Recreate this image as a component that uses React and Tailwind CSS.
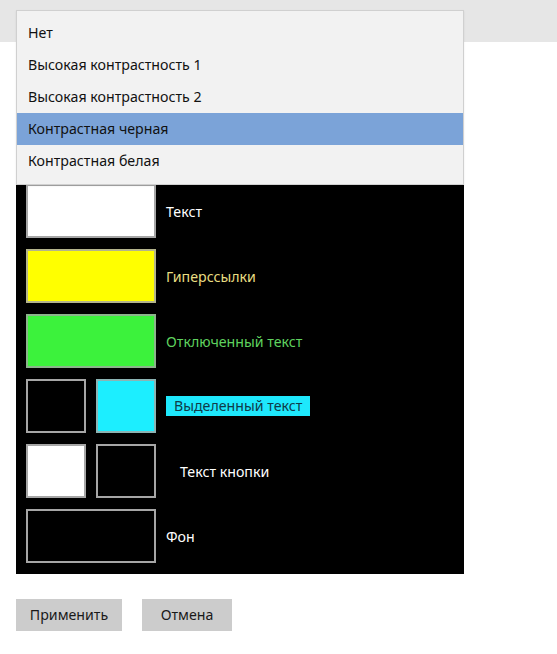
export default function App() {
  const font = { fontFamily: '"Noto Sans", "Open Sans", sans-serif' };
  const items = [
    "Нет",
    "Высокая контрастность 1",
    "Высокая контрастность 2",
    "Контрастная черная",
    "Контрастная белая",
  ];
  return (
    <div
      className="relative w-[557px] h-[654px] bg-white overflow-hidden font-['Noto_Sans','Open_Sans',sans-serif]"
      style={font}
    >
      <div className="h-[42px] bg-[#e6e6e6]" />
      <div className="px-4">
        <div className="mt-[131px] w-[448px] bg-black px-[10px] py-[11px] flex flex-col gap-[11px]">
          <div className="h-[54px] flex items-center">
            <div className="w-[130px] h-[54px] bg-white border-2 border-[#a6a6a6]" />
            <span className="ml-[10px] mt-[2px] text-[14.2px] text-white">Текст</span>
          </div>
          <div className="h-[54px] flex items-center">
            <div className="w-[130px] h-[54px] bg-[#ffff00] border-2 border-[#b4b48c]" />
            <span className="ml-[10px] mt-[2px] text-[14.2px] text-[#e9de82]">Гиперссылки</span>
          </div>
          <div className="h-[54px] flex items-center">
            <div className="w-[130px] h-[54px] bg-[#3cf23c] border-2 border-[#8cb48c]" />
            <span className="ml-[10px] mt-[2px] text-[14.2px] text-[#5fd25f]">Отключенный текст</span>
          </div>
          <div className="h-[54px] flex items-center">
            <div className="w-[60px] h-[54px] bg-black border-2 border-[#a6a6a6]" />
            <div className="ml-[10px] w-[60px] h-[54px] bg-[#1ceeff] border-2 border-[#8cb4b4]" />
            <span className="ml-[10px] h-[20px] px-2 flex items-center bg-[#1ee8fc] text-[14.2px] text-[#0f3a48]">
              Выделенный текст
            </span>
          </div>
          <div className="h-[54px] flex items-center">
            <div className="w-[60px] h-[54px] bg-white border-2 border-[#a6a6a6]" />
            <div className="ml-[10px] w-[60px] h-[54px] bg-black border-2 border-[#a6a6a6]" />
            <span className="ml-[24px] mt-[2px] text-[14.2px] text-white">Текст кнопки</span>
          </div>
          <div className="h-[54px] flex items-center">
            <div className="w-[130px] h-[54px] bg-black border-2 border-[#a6a6a6]" />
            <span className="ml-[10px] mt-[2px] text-[14.2px] text-white">Фон</span>
          </div>
        </div>
        <div className="mt-[25px] flex gap-[20px]">
          <button className="w-[106px] h-[32px] bg-[#cccccc] text-[14.2px] text-[#1a1a1a]">
            Применить
          </button>
          <button className="w-[90px] h-[32px] bg-[#cccccc] text-[14.2px] text-[#1a1a1a]">
            Отмена
          </button>
        </div>
      </div>

      <div className="absolute left-4 top-[10px] w-[448px] h-[175px] bg-[#f2f2f2] border border-[#d0d0d0] py-[6px] shadow-[0_1px_2px_rgba(0,0,0,0.08)]">
        {items.map((t, i) => (
          <div
            key={t}
            className={
              i === 3
                ? "h-[32px] flex items-center px-[11px] bg-[#7ba3d8] text-[14.2px] text-[#111]"
                : "h-[32px] flex items-center px-[11px] text-[14.2px] text-[#111]"
            }
          >
            {t}
          </div>
        ))}
      </div>
    </div>
  );
}
